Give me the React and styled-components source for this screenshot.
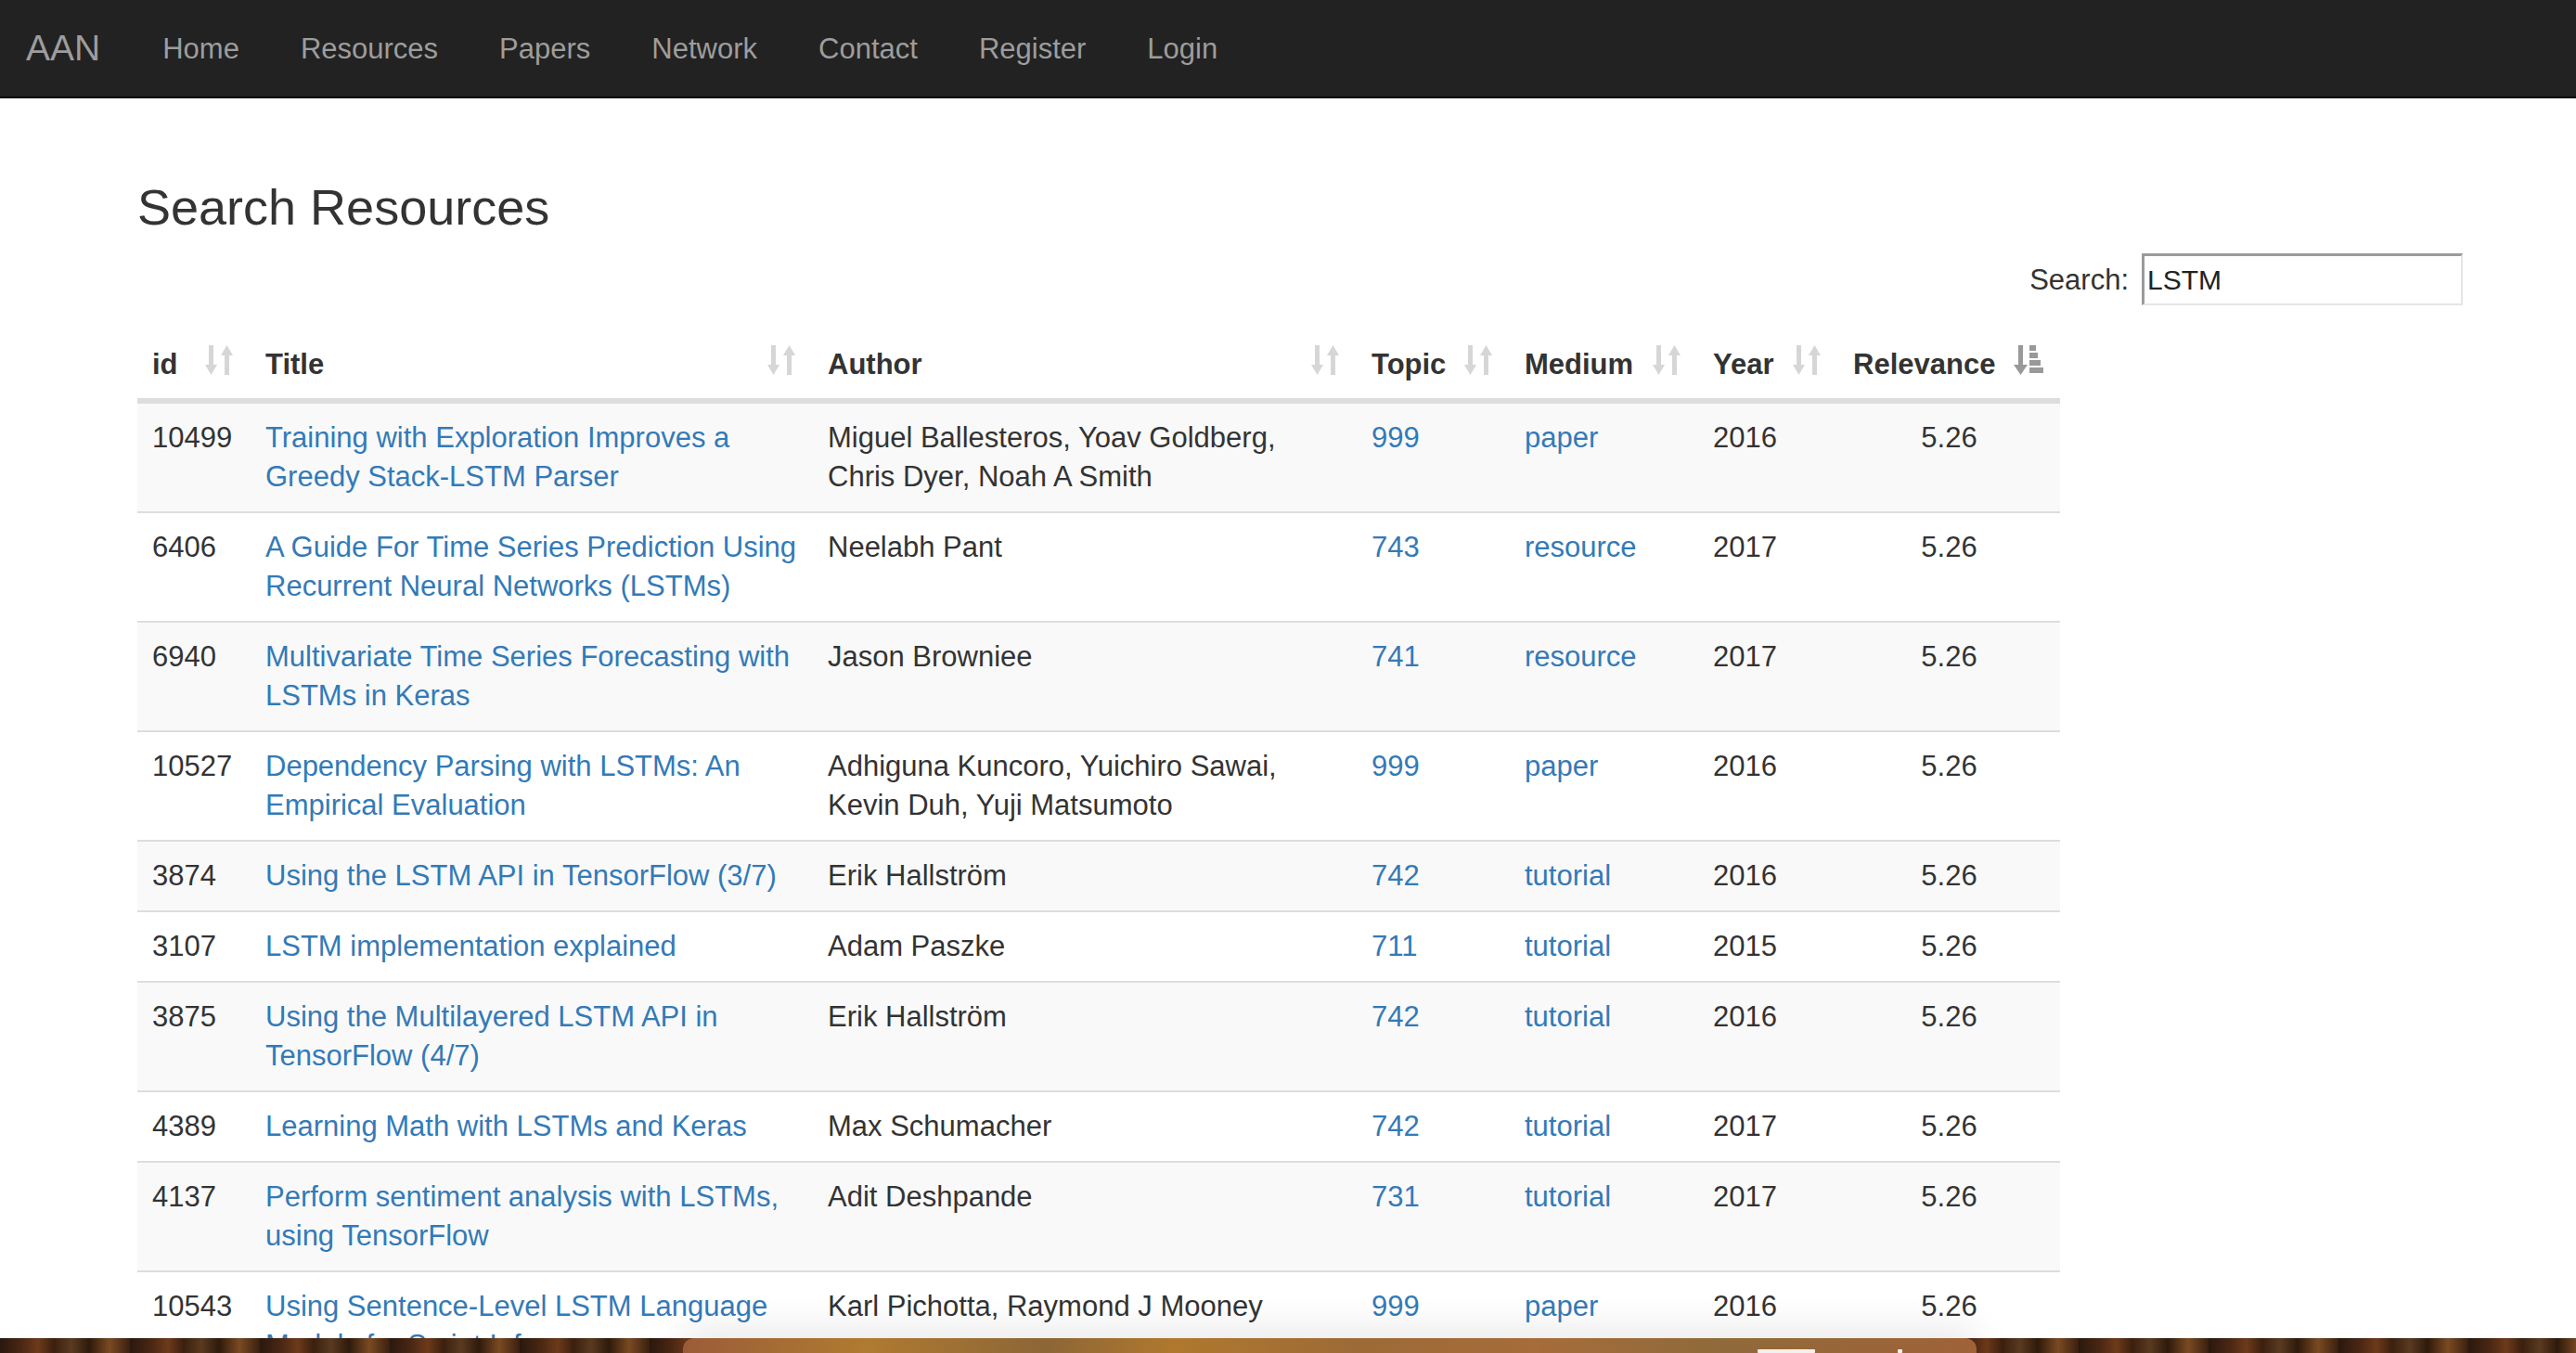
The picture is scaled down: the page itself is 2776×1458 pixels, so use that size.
import React from "react";
import styled, { createGlobalStyle } from "styled-components";

const GlobalStyle = createGlobalStyle`
  html, body {
    margin: 0;
    padding: 0;
    overflow: hidden;
    background: #fff;
  }
  body {
    font-family: "Liberation Sans", Arial, Helvetica, sans-serif;
    font-size: 31px;
    line-height: 42px;
    color: #333;
  }
  * { box-sizing: border-box; }
`;

const Navbar = styled.nav`
  height: 106px;
  background: #222;
  border-bottom: 2px solid #080808;
  display: flex;
  align-items: center;
  padding-left: 28px;
`;

const Brand = styled.a`
  font-size: 39px;
  color: #9d9d9d;
  margin-right: 34px;
  text-decoration: none;
  line-height: 1;
  margin-top: -2px;
`;

const NavLink = styled.a`
  font-size: 31px;
  color: #9d9d9d;
  padding: 0 33px;
  text-decoration: none;
  line-height: 1;
`;

const Container = styled.main`
  width: 2506px;
  margin-left: 148px;
  padding-top: 88px;
`;

const Title = styled.h1`
  margin: 0;
  font-size: 54px;
  font-weight: 400;
  line-height: 1.1;
  color: #333;
`;

const SearchRow = styled.div`
  display: flex;
  justify-content: flex-end;
  align-items: center;
  gap: 14px;
  margin-top: 20px;
`;

const SearchLabel = styled.label`
  font-size: 31px;
  color: #333;
  margin-top: 2px;
`;

const SearchInput = styled.input`
  width: 346px;
  height: 56px;
  border-style: solid;
  border-width: 3px 2px 2px 3px;
  border-color: #9a9a9a #e6e6e6 #e6e6e6 #9a9a9a;
  padding: 0 4px 0 3px;
  font-family: "Liberation Sans", Arial, Helvetica, sans-serif;
  font-size: 30px;
  color: #222;
  outline: none;
  background: #fff;
`;

const Table = styled.table`
  margin-top: 26px;
  width: 2072px;
  table-layout: fixed;
  border-collapse: collapse;
  border-spacing: 0;
`;

const HeadCell = styled.th`
  text-align: left;
  font-weight: 700;
  vertical-align: top;
  padding: 17px ${(p) => p.$pr || 19}px 15px 16px;
  border-bottom: 6px solid #ddd;
`;

const HeadInner = styled.div`
  display: flex;
  justify-content: space-between;
  align-items: flex-start;
`;

const Row = styled.tr`
  background: ${(p) => (p.$striped ? "#f9f9f9" : "#fff")};
  & + & {
    border-top: 2px solid #ddd;
  }
`;

const Cell = styled.td`
  padding: 16px ${(p) => p.$pr || 16}px 16px 16px;
  vertical-align: top;
  text-align: ${(p) => p.$align || "left"};
`;

const Link = styled.a`
  color: #337ab7;
  text-decoration: none;
`;

const Desktop = styled.div`
  position: fixed;
  left: 0;
  right: 0;
  bottom: 0;
  height: 16px;
  background: repeating-linear-gradient(
    90deg,
    #2a180e 0px,
    #4a2714 23px,
    #6d3a1a 41px,
    #3b200f 58px,
    #5a3a20 77px,
    #2e1a0c 96px,
    #7a4a22 118px,
    #3a2010 140px
  );
`;

const Dock = styled.div`
  position: absolute;
  left: 736px;
  top: 0;
  width: 1394px;
  height: 30px;
  border-radius: 12px 12px 0 0;
  background: linear-gradient(
    90deg,
    #9a5c38 0%,
    #b07a30 14%,
    #8c6636 28%,
    #b0782e 38%,
    #9c6a36 52%,
    #a66c3a 66%,
    #8f6a3a 80%,
    #a06238 100%
  );
  box-shadow: 0 -6px 40px rgba(0, 0, 0, 0.12);
`;

const DockIcon = styled.div`
  position: absolute;
  left: ${(p) => p.$left}px;
  top: 12px;
  width: ${(p) => p.$w}px;
  height: 4px;
  background: rgba(255, 255, 255, 0.9);
  border-radius: 1px;
`;

const SortBoth = () => (
  <svg width="30" height="32" viewBox="0 0 30 32" fill="#d6d6d6">
    <rect x="4" y="0" width="5" height="23" />
    <polygon points="0,21 13,21 6.5,32" />
    <polygon points="17,11 30,11 23.5,0" />
    <rect x="21" y="9" width="5" height="23" />
  </svg>
);

const SortDesc = () => (
  <svg width="32" height="32" viewBox="0 0 32 32" fill="#999">
    <rect x="5" y="0" width="5" height="23" />
    <polygon points="0,21 15,21 7.5,32" />
    <rect x="17" y="0" width="7" height="6" />
    <rect x="17" y="8" width="9" height="6" />
    <rect x="17" y="16" width="12" height="6" />
    <rect x="17" y="24" width="15" height="6" />
  </svg>
);

const columns = [
  { key: "id", label: "id", width: 122 },
  { key: "title", label: "Title", width: 606 },
  { key: "author", label: "Author", width: 586 },
  { key: "topic", label: "Topic", width: 165 },
  { key: "medium", label: "Medium", width: 203 },
  { key: "year", label: "Year", width: 151 },
  { key: "rel", label: "Relevance", width: 239, active: true },
];

const rows = [
  ["10499", "Training with Exploration Improves a Greedy Stack-LSTM Parser", "Miguel Ballesteros, Yoav Goldberg, Chris Dyer, Noah A Smith", "999", "paper", "2016"],
  ["6406", "A Guide For Time Series Prediction Using Recurrent Neural Networks (LSTMs)", "Neelabh Pant", "743", "resource", "2017"],
  ["6940", "Multivariate Time Series Forecasting with LSTMs in Keras", "Jason Browniee", "741", "resource", "2017"],
  ["10527", "Dependency Parsing with LSTMs: An Empirical Evaluation", "Adhiguna Kuncoro, Yuichiro Sawai, Kevin Duh, Yuji Matsumoto", "999", "paper", "2016"],
  ["3874", "Using the LSTM API in TensorFlow (3/7)", "Erik Hallström", "742", "tutorial", "2016"],
  ["3107", "LSTM implementation explained", "Adam Paszke", "711", "tutorial", "2015"],
  ["3875", "Using the Multilayered LSTM API in TensorFlow (4/7)", "Erik Hallström", "742", "tutorial", "2016"],
  ["4389", "Learning Math with LSTMs and Keras", "Max Schumacher", "742", "tutorial", "2017"],
  ["4137", "Perform sentiment analysis with LSTMs, using TensorFlow", "Adit Deshpande", "731", "tutorial", "2017"],
  ["10543", "Using Sentence-Level LSTM Language Models for Script Inference", "Karl Pichotta, Raymond J Mooney", "999", "paper", "2016"],
];

const navItems = ["Home", "Resources", "Papers", "Network", "Contact", "Register", "Login"];

export default function App() {
  return (
    <>
      <GlobalStyle />
      <Navbar>
        <Brand href="#">AAN</Brand>
        {navItems.map((n) => (
          <NavLink key={n} href="#">
            {n}
          </NavLink>
        ))}
      </Navbar>
      <Container>
        <Title>Search Resources</Title>
        <SearchRow>
          <SearchLabel htmlFor="search">Search:</SearchLabel>
          <SearchInput id="search" type="search" defaultValue="LSTM" />
        </SearchRow>
        <Table>
          <colgroup>
            {columns.map((c) => (
              <col key={c.key} style={{ width: c.width }} />
            ))}
          </colgroup>
          <thead>
            <tr>
              {columns.map((c) => (
                <HeadCell key={c.key} $pr={c.active ? 18 : 19}>
                  <HeadInner>
                    <span>{c.label}</span>
                    {c.active ? <SortDesc /> : <SortBoth />}
                  </HeadInner>
                </HeadCell>
              ))}
            </tr>
          </thead>
          <tbody>
            {rows.map((r, i) => (
              <Row key={r[0]} $striped={i % 2 === 0}>
                <Cell>{r[0]}</Cell>
                <Cell $pr={8}>
                  <Link href="#">{r[1]}</Link>
                </Cell>
                <Cell $pr={40}>{r[2]}</Cell>
                <Cell>
                  <Link href="#">{r[3]}</Link>
                </Cell>
                <Cell>
                  <Link href="#">{r[4]}</Link>
                </Cell>
                <Cell>{r[5]}</Cell>
                <Cell $align="center">5.26</Cell>
              </Row>
            ))}
          </tbody>
        </Table>
      </Container>
      <Desktop>
        <Dock>
          <DockIcon $left={1158} $w={62} />
          <DockIcon $left={1309} $w={5} />
        </Dock>
      </Desktop>
    </>
  );
}
